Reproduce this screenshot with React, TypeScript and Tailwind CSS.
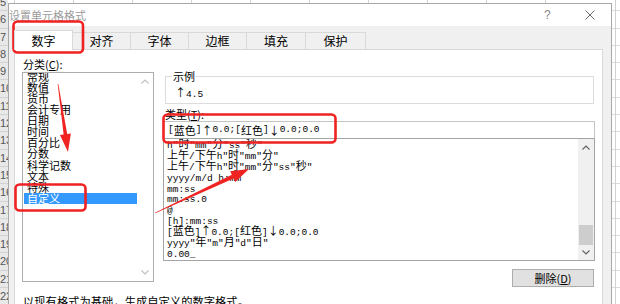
import React from "react";

function Mono({ text }: { text: string }) {
  const parts = text.split(/([^\x00-\x7f]+)/).filter((p) => p.length > 0);
  return (
    <>
      {parts.map((p, i) =>
        /[^\x00-\x7f]/.test(p) ? (
          <span key={i} className="font-['Noto_Sans_CJK_SC',sans-serif] text-[11px]">
            {p}
          </span>
        ) : (
          <span key={i} className="font-['Liberation_Mono',monospace] text-[9.5px]">
            {p}
          </span>
        )
      )}
    </>
  );
}

const rows = [5, 6, 7, 8, 9, 10, 11, 12, 13, 14, 15, 16, 17, 18, 19, 20, 21, 22];

const categories = ["常规", "数值", "货币", "会计专用", "日期", "时间", "百分比", "分数", "科学记数", "文本", "特殊", "自定义"];

const formats = [
  'h"时"mm"分"ss"秒"',
  '上午/下午h"时"mm"分"',
  '上午/下午h"时"mm"分"ss"秒"',
  "yyyy/m/d h:mm",
  "mm:ss",
  "mm:ss.0",
  "@",
  "[h]:mm:ss",
  "[蓝色]↑0.0;[红色]↓0.0;0.0",
  'yyyy"年"m"月"d"日"',
  "0.00_",
];

function Chevron({ up, color }: { up: boolean; color: string }) {
  return (
    <svg width="8" height="5" viewBox="0 0 8 5">
      <path d={up ? "M0.5 4.5 L4 1 L7.5 4.5" : "M0.5 0.5 L4 4 L7.5 0.5"} fill="none" stroke={color} strokeWidth="1.1" />
    </svg>
  );
}

const tabs = [
  { t: "数字", w: "w-[59px]" },
  { t: "对齐", w: "w-[58px]" },
  { t: "字体", w: "w-[58px]" },
  { t: "边框", w: "w-[58px]" },
  { t: "填充", w: "w-[59px]" },
  { t: "保护", w: "w-[60px]" },
];

export default function App() {
  return (
    <div className="relative w-[620px] h-[304px] overflow-hidden bg-white flex font-['Noto_Sans_CJK_SC',sans-serif] text-black">
      {/* left row headers */}
      <div className="w-[8px] shrink-0 flex flex-col -mt-[6px] bg-[#e8e8e8] overflow-hidden">
        {rows.map((r) => (
          <div
            key={r}
            className="h-[17.3px] shrink-0 border-b border-[#d2d2d2] text-[11px] leading-[17px] text-[#555] whitespace-nowrap font-['Liberation_Sans',sans-serif]"
          >
            {r}
          </div>
        ))}
      </div>

      {/* middle */}
      <div className="w-[604px] shrink-0 flex flex-col">
        <div className="h-[3px] shrink-0 flex bg-white">
          <div className="w-[6px] shrink-0" />
          {[0, 1, 2, 3, 4, 5, 6, 7, 8, 9].map((i) => (
            <div key={i} className="w-[59px] shrink-0 border-l border-[#d4d4d4]" />
          ))}
        </div>
        <div className="flex-1 flex flex-col border-x border-t border-[#a8a8a8] bg-[#f0f0f0]">
          {/* title bar */}
          <div className="h-[22px] shrink-0 bg-white flex items-center">
            <div className="flex-1 text-[11px] leading-[14px] text-[#9b9b9b]">设置单元格格式</div>
            <div className="w-[8px] text-[12px] leading-[14px] text-[#8a8a8a] font-['Liberation_Sans',sans-serif]">?</div>
            <div className="w-[33px]" />
            <svg width="10" height="10" viewBox="0 0 10 10">
              <path d="M0.5 0.5 L9.5 9.5 M9.5 0.5 L0.5 9.5" stroke="#6a6a6a" strokeWidth="1" />
            </svg>
            <div className="w-[16px]" />
          </div>

          {/* body */}
          <div className="flex-1 flex flex-col pl-[5px] pr-[8px] pt-[4px]">
            <div className="h-[19px] shrink-0 flex items-end">
              {tabs.map((tab, i) =>
                i === 0 ? (
                  <div
                    key={tab.t}
                    className={`${tab.w} h-[20px] -mb-px relative z-10 bg-white border border-b-0 border-[#d9d9d9] flex items-center justify-center text-[12px] leading-[14px]`}
                  >
                    {tab.t}
                  </div>
                ) : (
                  <div
                    key={tab.t}
                    className={`${tab.w} h-[17px] bg-[#f0f0f0] border-t border-r border-[#d9d9d9] flex items-center justify-center text-[12px] leading-[14px]`}
                  >
                    {tab.t}
                  </div>
                )
              )}
            </div>

            {/* panel */}
            <div className="flex-1 bg-white border border-[#d9d9d9] pl-[7px] flex flex-col">
              <div className="flex">
                {/* left column */}
                <div className="w-[132px] shrink-0 flex flex-col">
                  <div className="h-[22px] pt-[8px] text-[11px] leading-[12px] pl-[1px]">
                    分类(<span className="underline">C</span>):
                  </div>
                  <div className="h-[210px] border border-[#adadad] flex overflow-hidden">
                    <div className="flex-1 pl-[1px] -mt-[2.5px] flex flex-col">
                      {categories.map((c) => (
                        <div
                          key={c}
                          className={`h-[11.15px] shrink-0 leading-[11.15px] text-[11px] pl-[3px] whitespace-nowrap ${
                            c === "自定义" ? "bg-[#3399ff] text-white" : ""
                          }`}
                        >
                          {c}
                        </div>
                      ))}
                    </div>
                    <div className="w-[16px] shrink-0 flex flex-col bg-white">
                      <div className="h-[17px] flex items-center justify-center">
                        <Chevron up color="#bfbfbf" />
                      </div>
                      <div className="flex-1" />
                      <div className="h-[17px] flex items-center justify-center">
                        <Chevron up={false} color="#bfbfbf" />
                      </div>
                    </div>
                  </div>
                </div>

                {/* right column */}
                <div className="ml-[9px] w-[432px] shrink-0 flex flex-col">
                  <div className="mt-[26px] ml-[2px] mr-[1px] h-[28px] border border-[#dcdcdc] relative">
                    <div className="absolute left-[6px] -top-[8px] bg-white px-[1px] text-[11px] leading-[14px]">示例</div>
                    <div className="pl-[9px] pt-[7px] leading-[12px] whitespace-nowrap">
                      <Mono text="↑4.5" />
                    </div>
                  </div>
                  <div className="mt-[4px] h-[12px] pl-[2px] text-[11px] leading-[12px]">
                    类型(<span className="underline">T</span>):
                  </div>
                  <div className="mt-[1px] h-[18px] border border-[#c4c4c4] flex items-center pl-[4px] leading-[12px] whitespace-nowrap">
                    <Mono text="[蓝色]↑0.0;[红色]↓0.0;0.0" />
                  </div>
                  <div className="-mt-px h-[123px] border border-[#a5a5a5] flex relative">
                    <div className="flex-1 pl-[3px] flex flex-col overflow-hidden">
                      <div className="-mt-[3px] flex flex-col">
                        {formats.map((f, i) => (
                          <div key={i} className="h-[10.9px] shrink-0 leading-[10.9px] whitespace-nowrap">
                            <Mono text={f} />
                          </div>
                        ))}
                      </div>
                    </div>
                    <div className="w-[16px] shrink-0 flex flex-col bg-[#f0f0f0]">
                      <div className="h-[17px] flex items-center justify-center">
                        <Chevron up color="#606060" />
                      </div>
                      <div className="flex-1" />
                      <div className="h-[20px] bg-[#cdcdcd] mx-[1px]" />
                      <div className="h-[15px] flex items-center justify-center">
                        <Chevron up={false} color="#606060" />
                      </div>
                    </div>
                  </div>
                  <div className="mt-[8px] flex justify-end pr-[1px]">
                    <div className="w-[82px] h-[18px] bg-[#e1e1e1] border border-[#adadad] flex items-center justify-center text-[11px] leading-[12px]">
                      删除(<span className="underline">D</span>)
                    </div>
                  </div>
                </div>
              </div>
              <div className="mt-[8px] pl-[1px] text-[11.3px] leading-[12px] whitespace-nowrap">
                以现有格式为基础，生成自定义的数字格式。
              </div>
            </div>
          </div>
        </div>
      </div>

      {/* right spreadsheet strip */}
      <div className="w-[8px] shrink-0 flex -mt-[6px] bg-white">
        <div className="w-[3px] shrink-0 flex flex-col">
          {rows.map((r) => (
            <div key={r} className="h-[17.3px] shrink-0 border-b border-[#dcdcdc]" />
          ))}
        </div>
        <div className="flex-1 flex flex-col border-l border-[#d0d0d0]">
          {rows.map((r) => (
            <div key={r} className="h-[17.3px] shrink-0 border-b border-[#dcdcdc]" />
          ))}
        </div>
      </div>

      {/* annotations */}
      <svg className="absolute left-0 top-0 pointer-events-none" width="620" height="304" viewBox="0 0 620 304">
        <rect x="13.5" y="21.5" width="69.5" height="31" rx="4" fill="none" stroke="#f02222" strokeWidth="2.6" />
        <rect x="15.5" y="184.5" width="70" height="26" rx="4" fill="none" stroke="#f02222" strokeWidth="2.6" />
        <rect x="163.5" y="114.5" width="172" height="28" rx="4" fill="none" stroke="#f02222" strokeWidth="2.6" />
        <polygon
          points="57.7,84.04 63.62,134.46 59.96,135 68,152 70.84,133.4 67.18,133.94 58.3,83.96"
          fill="#f02222"
        />
        <polygon
          points="154.87,212.73 231.85,174.79 230.16,171.17 249,169 235.24,182.03 233.55,178.41 155.13,213.27"
          fill="#f02222"
        />
      </svg>
    </div>
  );
}
